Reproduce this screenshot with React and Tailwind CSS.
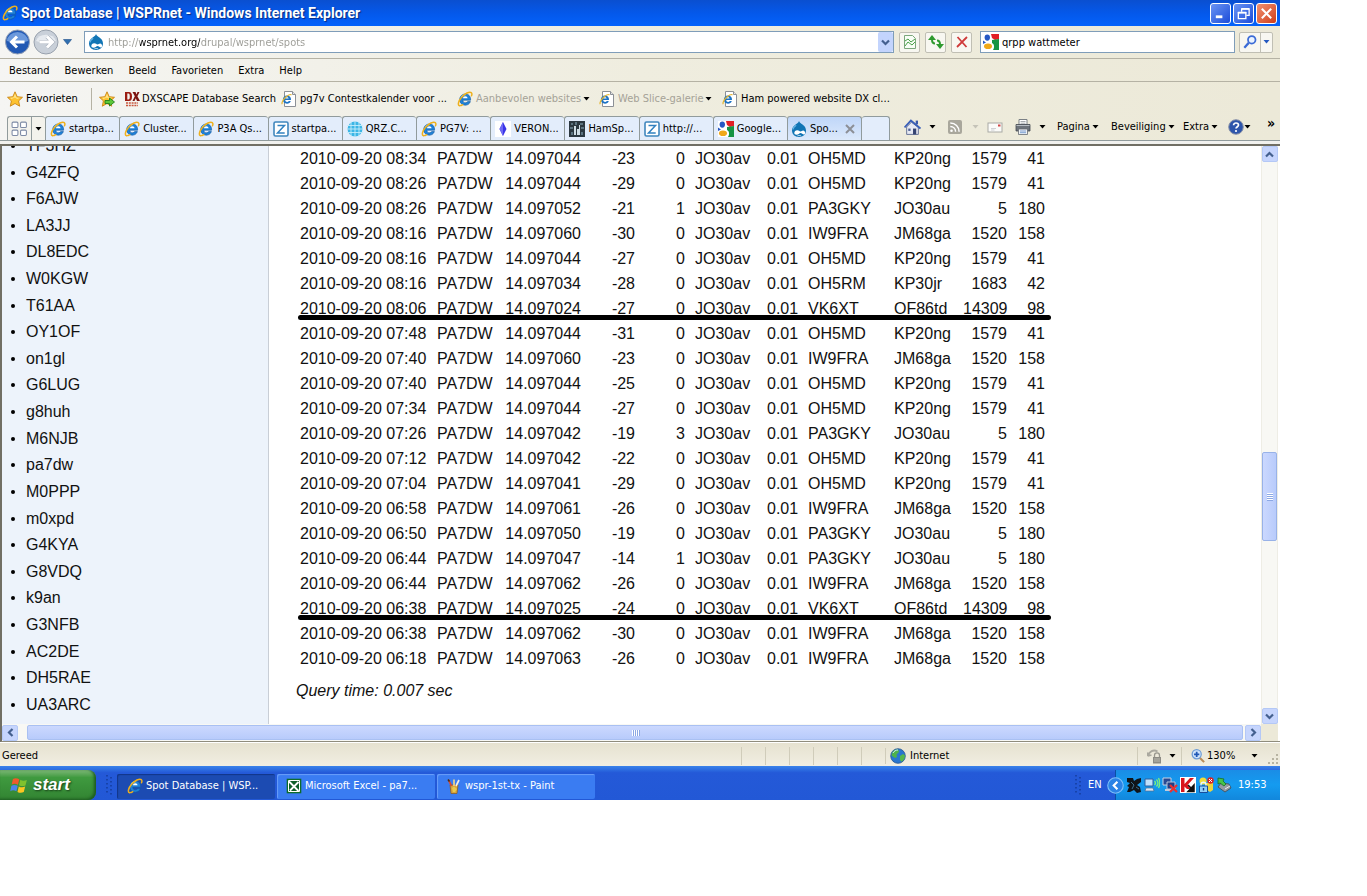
import React from 'react';

const callsigns = [
  'TF3HZ', 'G4ZFQ', 'F6AJW', 'LA3JJ', 'DL8EDC', 'W0KGW', 'T61AA', 'OY1OF', 'on1gl', 'G6LUG', 'g8huh',
  'M6NJB', 'pa7dw', 'M0PPP', 'm0xpd', 'G4KYA', 'G8VDQ', 'k9an', 'G3NFB', 'AC2DE', 'DH5RAE', 'UA3ARC',
];

const reporters = {
  OH5MD: ['KP20ng', 1579, 41],
  PA3GKY: ['JO30au', 5, 180],
  IW9FRA: ['JM68ga', 1520, 158],
  OH5RM: ['KP30jr', 1683, 42],
  VK6XT: ['OF86td', 14309, 98],
};

// time, frequency, snr, drift, reporter
const spots = [
  ['08:34', '14.097044', -23, 0, 'OH5MD'],
  ['08:26', '14.097044', -29, 0, 'OH5MD'],
  ['08:26', '14.097052', -21, 1, 'PA3GKY'],
  ['08:16', '14.097060', -30, 0, 'IW9FRA'],
  ['08:16', '14.097044', -27, 0, 'OH5MD'],
  ['08:16', '14.097034', -28, 0, 'OH5RM'],
  ['08:06', '14.097024', -27, 0, 'VK6XT'],
  ['07:48', '14.097044', -31, 0, 'OH5MD'],
  ['07:40', '14.097060', -23, 0, 'IW9FRA'],
  ['07:40', '14.097044', -25, 0, 'OH5MD'],
  ['07:34', '14.097044', -27, 0, 'OH5MD'],
  ['07:26', '14.097042', -19, 3, 'PA3GKY'],
  ['07:12', '14.097042', -22, 0, 'OH5MD'],
  ['07:04', '14.097041', -29, 0, 'OH5MD'],
  ['06:58', '14.097061', -26, 0, 'IW9FRA'],
  ['06:50', '14.097050', -19, 0, 'PA3GKY'],
  ['06:44', '14.097047', -14, 1, 'PA3GKY'],
  ['06:44', '14.097062', -26, 0, 'IW9FRA'],
  ['06:38', '14.097025', -24, 0, 'VK6XT'],
  ['06:38', '14.097062', -30, 0, 'IW9FRA'],
  ['06:18', '14.097063', -26, 0, 'IW9FRA'],
];

/* ---------- Icons ---------- */

const Svg = ({ size = 16, className = '', children }) => (
  <svg width={size} height={size} viewBox="0 0 16 16" className={`shrink-0 ${className}`} aria-hidden="true">
    {children}
  </svg>
);

const IeIcon = ({ size = 16 }) => (
  <Svg size={size}>
    <path d="M13.6 9.2H5.8c.1 1.7 1.1 2.6 2.6 2.6 1.1 0 1.900-.5 2.300-1.200h2.700c-.8 2.300-2.700 3.600-5.100 3.600-3.400 0-5.600-2.300-5.600-5.600S5.100 3 8.400 3c3.400 0 5.400 2.500 5.200 6.200z" fill="#1f82d8" stroke="#0d559f" strokeWidth=".6" />
    <path d="M5.900 7.200h4.700C10.400 5.900 9.600 5.200 8.300 5.200S6.100 5.900 5.900 7.200z" fill="#fff" />
    <path d="M4 6.500C5 4.500 6.700 3.700 8.600 3.800" stroke="#8fd2ff" strokeWidth="1.100" fill="none" />
    <path d="M2.300 14.600c-1.900-.8-.7-4.800 2.300-8.300C7.900 2.500 12.500.2 14.300 1.700c.8.7.7 1.900.2 3.100" stroke="#eeb01c" strokeWidth="1.500" fill="none" strokeLinecap="round" />
    <path d="M2.300 14.600c1 .3 2.300-.2 3.500-1" stroke="#eeb01c" strokeWidth="1.300" fill="none" strokeLinecap="round" />
  </Svg>
);

const PageIcon = () => (
  <Svg>
    <path d="M3.500.5h8l3 3v12h-11z" fill="#fff" stroke="#8c9096" />
    <path d="M11.500.5v3h3" fill="#e4e4e4" stroke="#8c9096" />
    <path d="M10 9H4.200c.1 1.300.8 1.900 1.900 1.900.8 0 1.300-.3 1.700-.9h2c-.6 1.700-2 2.700-3.800 2.700-2.500 0-4.100-1.700-4.100-4.100s1.600-4.100 4.100-4.100S10.200 6.200 10 9z" fill="#1d73c4" />
    <path d="M4.300 7.500h3.300c-.2-.9-.8-1.300-1.600-1.300s-1.500.4-1.700 1.300z" fill="#fff" />
    <path d="M1.300 13.200C.3 12.200 2 8.800 4.600 6.300c2.300-2.200 5-3.200 5.900-2.300" stroke="#e6b52c" strokeWidth="1.200" fill="none" />
  </Svg>
);

const StarIcon = ({ add }) => (
  <Svg>
    <path d="M8 .8l2.200 4.900 5.300.6-3.900 3.600 1.100 5.300L8 12.500l-4.700 2.700 1.100-5.300L.5 6.300l5.300-.6z" fill="#fdc22f" stroke="#c98415" strokeWidth=".9" strokeLinejoin="round" />
    <path d="M8 2.700l1.500 3.700 3.600.4-3 1.200L8 6.500 4.500 8 3 6.800l3.500-.4z" fill="#ffe58a" />
    {add && <path d="M6 9.500h4.500V7l5 4-5 4v-2.500H6z" fill="#5dc83a" stroke="#23801b" strokeWidth=".9" />}
  </Svg>
);

const DrupalIcon = ({ size = 16 }) => (
  <Svg size={size}>
    <path d="M8 0c.7 1.900 2 2.400 3.500 3.500C13.600 5 15 6.900 15 9.400 15 13.200 11.900 16 8 16s-7-2.800-7-6.600C1 6.900 2.500 4.900 4.600 3.500 6.100 2.500 7.400 1.900 8 0z" fill="#1175b5" />
    <path d="M5.200 4.200C3.500 5.200 2.300 6.500 2 8.300" stroke="#66b4e4" strokeWidth="1.200" fill="none" />
    <path d="M3.300 12.100c0-1.700 1.300-2.900 2.900-2.900 1.700 0 2.300 1.200 3.300 1.200 1.100 0 1.500-1 2.600-1 1.200 0 2 1.200 2 2.400 0 1-.5 1.700-1.200 1.700-1.200 0-2.100-1.500-3.300-1.500s-2.300 1.800-4 1.800c-1.400 0-2.300-.7-2.300-1.700z" fill="#fff" />
    <path d="M6.300 15c1.300-.6 2.600-.6 3.800 0" stroke="#fff" strokeWidth=".8" fill="none" />
  </Svg>
);

const GoogleIcon = () => (
  <Svg>
    <path d="M0 0h16v16H0z" fill="#fff" />
    <path d="M8 0h8v5l-4 1-3-2z" fill="#e21f26" />
    <path d="M9 6l7-1v11h-6c2-3 1-6-1-7z" fill="#169443" />
    <ellipse cx="4.300" cy="3.600" rx="2.700" ry="3.100" fill="#2658c4" />
    <ellipse cx="5" cy="12.300" rx="4" ry="2.800" fill="#f0a818" />
    <path d="M0 6.500l3 2-3 1.500z" fill="#2658c4" />
  </Svg>
);

const ZIcon = () => (
  <Svg>
    <rect x="1" y="1" width="14" height="14" rx="1.500" fill="#fff" stroke="#3f86bd" strokeWidth="1.600" />
    <path d="M4.500 4.500h7l-7 7.500h7.200" fill="none" stroke="#3181c0" strokeWidth="1.500" />
  </Svg>
);

const QrzIcon = () => (
  <Svg>
    <circle cx="8" cy="8" r="7.500" fill="#3cb6e6" />
    <path d="M0 4.500h16M0 8h16M0 11.500h16M4 0v16M8 0v16M12 0v16" stroke="#c4ecfa" strokeWidth=".9" />
  </Svg>
);

const VeronIcon = () => (
  <Svg>
    <path d="M0 0h16v16H0z" fill="#fff" />
    <path d="M8 1l3.500 7L8 15 4.500 8z" fill="#3a35e8" />
    <path d="M8 1v14L4.500 8z" fill="#6f6af5" />
  </Svg>
);

const HamSpotsIcon = () => (
  <Svg>
    <path d="M0 0h16v16H0z" fill="#2c3840" />
    <path d="M2 2h2v2H2zM6 1h2v3H6zM11 2h3v2h-3zM1 6h3v2H1zM12 6h3v2h-3zM2 11h2v3H2zM12 11h2v3h-2z" fill="#5d7480" />
    <path d="M5 5h2v9H5zM8 8h2v6H8zM10 4h1v10h-1z" fill="#cfdde4" />
  </Svg>
);

const DxIcon = () => (
  <svg width="16" height="16" viewBox="0 0 16 16" className="shrink-0" aria-hidden="true">
    <path d="M1 1h4c2 0 3 1.500 3 4.500S7 10 5 10H1zM3.300 2.500v6H4.500c1 0 1.300-1 1.300-3s-.3-3-1.300-3z" fill="#9a1c12" fillRule="evenodd" />
    <path d="M8.500 1h3l1 2.500 1-2.500h2L13.400 5.300 16 10h-3l-1.200-2.700L10.500 10h-2l2.300-4.700z" fill="#7a1410" />
    <path d="M2 12h12M2 14.500h12" stroke="#c8553c" strokeWidth="1.300" strokeDasharray="2 .8" />
  </svg>
);

const GlobeIcon = () => (
  <Svg>
    <circle cx="8" cy="8" r="7.300" fill="#2976cf" stroke="#27568f" strokeWidth=".8" />
    <path d="M2.500 4C4 1.500 7 1 8.500 1.800L9 4 6.500 6.500 7 9l-2 1L1.500 7.500z" fill="#4fb24a" />
    <path d="M10 8l3-2 2 1.500c0 3-1.500 5-3.500 6.300L10 12z" fill="#56b84c" />
    <path d="M3 5c1-2 3-3 5-3" stroke="#c9ecff" fill="none" />
  </Svg>
);

const HomeIcon = () => (
  <Svg size={17}>
    <path d="M11 1.500h2.200V5H11z" fill="#3a58a8" />
    <path d="M2.500 7.500L7 3l6.500 5v6.500h-11z" fill="#e6e9f3" stroke="#54628a" strokeWidth=".8" />
    <path d="M.5 8L6.500 1.500 15.500 9" fill="none" stroke="#3a5fb8" strokeWidth="1.700" />
    <path d="M4 9h2.200v2.200H4z" fill="#4b5e95" />
    <path d="M8.500 9h3v5.500h-3z" fill="#344372" />
  </Svg>
);

const RssIcon = () => (
  <Svg>
    <rect x="1" y="1" width="14" height="14" rx="2" fill="#a9a79c" />
    <circle cx="4.500" cy="11.700" r="1.300" fill="#fff" />
    <path d="M3.300 7.500c3 0 5.300 2.300 5.300 5.300M3.300 4c5 0 8.800 3.800 8.800 8.800" fill="none" stroke="#fff" strokeWidth="1.500" />
  </Svg>
);

const MailIcon = () => (
  <Svg>
    <rect x="1" y="4" width="14" height="9" fill="#fbfbf9" stroke="#a9aaa5" />
    <path d="M11 5.500h2.500v2H11z" fill="#d34848" />
    <path d="M4 9.500h5M4 11h3.500" stroke="#c5c7ca" strokeWidth=".8" />
  </Svg>
);

const PrinterIcon = () => (
  <Svg>
    <path d="M4 .5h8V6H4z" fill="#fff" stroke="#7b8085" />
    <path d="M5.500 2.500h5M5.500 4.200h5" stroke="#91969c" strokeWidth=".8" />
    <path d="M1 5.500h14V12H1z" fill="#6d737b" stroke="#454a52" strokeWidth=".8" />
    <path d="M1.500 6.500h13" stroke="#b4bac1" />
    <path d="M3.500 10h9v5.500h-9z" fill="#eef1f5" stroke="#656b72" strokeWidth=".8" />
    <path d="M5 12h6M5 13.700h6" stroke="#608cc8" strokeWidth=".8" />
  </Svg>
);

const HelpIcon = () => (
  <Svg>
    <circle cx="8" cy="8" r="7.300" fill="#2d55ab" stroke="#8b93a8" strokeWidth="1" />
    <path d="M5.600 6.300C5.600 4.700 6.700 4 8 4s2.500.8 2.500 2.100C10.500 7.700 8 7.700 8 9.600" fill="none" stroke="#fff" strokeWidth="1.700" />
    <circle cx="8" cy="12" r="1.100" fill="#fff" />
  </Svg>
);

const FlagIcon = () => (
  <Svg size={19}>
    <path d="M2.500 2.500C4.200 1.400 6 1.700 7.800 2.700L6.700 7.300C5 6.400 3.200 6.300 1.400 7.200z" fill="#ef5a2b" />
    <path d="M8.700 3.200c1.700 1 3.700 1 5.500.1L13 7.900c-1.800.9-3.700.8-5.400-.2z" fill="#7fc22e" />
    <path d="M1.200 8.200c1.800-1 3.500-.8 5.300.1L5.400 12.800c-1.800-.9-3.500-1-5.200 0z" fill="#4c84ea" />
    <path d="M7.400 8.800c1.700.9 3.600 1 5.400.1l-1.200 4.600c-1.800.9-3.600.8-5.300-.1z" fill="#fcc622" />
  </Svg>
);

const ExcelIcon = () => (
  <Svg>
    <path d="M.7.7h14.600v14.600H.7z" fill="#0d6b2b" />
    <path d="M2.500 2.500h11v11h-11z" fill="#0f5f29" stroke="#fff" />
    <path d="M3 3.500l9.500 9.500M12.500 4L4 12.500" stroke="#fff" strokeWidth="1.800" />
  </Svg>
);

const PaintIcon = () => (
  <Svg>
    <path d="M4 7h8l-1 8.500H5z" fill="#d9a43b" stroke="#8a5a18" strokeWidth=".7" />
    <path d="M5.500 8L2.500 2" stroke="#d84a32" strokeWidth="1.700" />
    <path d="M8 8V1.500" stroke="#f0d58b" strokeWidth="1.700" />
    <path d="M10 8l3-6" stroke="#f7efe0" strokeWidth="1.700" />
    <path d="M2 1.500l1.500 2" stroke="#44301b" strokeWidth="1.500" />
    <path d="M6 10l2-1.500L11 11l-2 3H7z" fill="#e9c94c" />
  </Svg>
);

const LockIcon = () => (
  <Svg>
    <path d="M1 8C2 3.500 6.500 1 10.500 3.500M1 8l-.5-3.500M1 8l3.500-1" fill="none" stroke="#aaa89f" strokeWidth="1.800" />
    <path d="M7.500 9V7.200c0-3.200 5-3.200 5 0V9" fill="none" stroke="#98968d" strokeWidth="1.300" />
    <path d="M6 9h8v6.500H6z" fill="#8d8b84" />
    <path d="M7 11h6M7 13h6" stroke="#c8c6bd" strokeWidth=".8" />
  </Svg>
);

const ZoomIcon = () => (
  <Svg size={14}>
    <path d="M10 10l5 5" stroke="#b98c58" strokeWidth="2.400" />
    <circle cx="6.500" cy="6" r="5.200" fill="#cfe3fb" stroke="#6c9bd6" strokeWidth="1.400" />
    <path d="M6.500 3v6M3.500 6h6" stroke="#1f57b5" strokeWidth="2" />
  </Svg>
);

const Caret = ({ className = 'text-black' }) => (
  <svg width="7" height="4" viewBox="0 0 7 4" className={`shrink-0 ${className}`} aria-hidden="true">
    <path d="M.5 0h6l-3 3.500z" fill="currentColor" />
  </svg>
);

const Chevron = ({ turn = '' }) => (
  <svg width="9" height="9" viewBox="0 0 9 9" className={turn} aria-hidden="true">
    <path d="M1 2.500l3.500 3.500L8 2.500" fill="none" stroke="#44608f" strokeWidth="2.200" />
  </svg>
);

/* ---------- Title bar ---------- */

const TitleBar = () => (
  <header className="flex h-[26px] shrink-0 items-center gap-[3px] bg-linear-to-b from-[#0a4fd0] via-[#0458ea] to-[#0462fb] pr-[3px] pl-[2px]">
    <IeIcon />
    <h1 className="flex-1 font-[Roboto,'Open_Sans',sans-serif] text-sm font-bold text-white [text-shadow:1px_1px_1px_#0a2a80]">
      Spot Database | WSPRnet - Windows Internet Explorer
    </h1>
    <div className="flex gap-[2px]">
      <button aria-label="Minimaliseren" className="flex size-[21px] items-center justify-center rounded-[3px] border border-white bg-linear-to-br from-[#6b93f3] to-[#1c49d8]">
        <Svg size={15}><path d="M3 11.500h7" stroke="#fff" strokeWidth="3" /></Svg>
      </button>
      <button aria-label="Verkleinen" className="flex size-[21px] items-center justify-center rounded-[3px] border border-white bg-linear-to-br from-[#6b93f3] to-[#1c49d8]">
        <Svg size={15}>
          <path d="M6 6V3h8v7h-3" fill="none" stroke="#fff" strokeWidth="1.400" />
          <path d="M2.500 7h8v6.500h-8z" fill="none" stroke="#fff" strokeWidth="1.400" />
          <path d="M2 7h9M6 3h8" stroke="#fff" strokeWidth="2" />
        </Svg>
      </button>
      <button aria-label="Sluiten" className="flex size-[21px] items-center justify-center rounded-[3px] border border-white bg-linear-to-br from-[#f0906f] to-[#cf3b13]">
        <Svg size={15}><path d="M3 3l10 10M13 3L3 13" stroke="#fff" strokeWidth="2.200" /></Svg>
      </button>
    </div>
  </header>
);

/* ---------- Navigation ---------- */

const toolButton = 'flex h-[21px] w-[21px] items-center justify-center rounded-[2px] border border-[#c0bfb4] bg-[#f8f7f1]';

const NavBar = () => (
  <div className="flex h-[33px] shrink-0 items-center border-b border-[#b5b2a4] pr-[7px] pl-[5px]">
    <button aria-label="Terug">
      <svg width="26" height="26" viewBox="0 0 26 26" aria-hidden="true">
        <circle cx="12.500" cy="13" r="12" fill="#2259b4" stroke="#94a0b5" />
        <path d="M2 12a10.500 9 0 0 1 21 0q-10 4-21 0z" fill="#6c99dc" />
        <path d="M12 7.500L6.500 13l5.500 5.500M7 13h12.500" fill="none" stroke="#fff" strokeWidth="3" />
      </svg>
    </button>
    <button aria-label="Vooruit" className="ml-[2px]">
      <svg width="26" height="26" viewBox="0 0 26 26" aria-hidden="true">
        <circle cx="13" cy="13" r="12" fill="#c9d0d9" stroke="#98a1ad" />
        <path d="M3 12a10.500 9 0 0 1 20 0q-10 4-20 0z" fill="#e6eaef" />
        <path d="M14 7.500l5.500 5.500-5.500 5.500M19 13H6.500" fill="none" stroke="#a9b1bc" strokeWidth="4.200" />
        <path d="M14 7.500l5.500 5.500-5.500 5.500M19 13H6.500" fill="none" stroke="#fff" strokeWidth="3" />
      </svg>
    </button>
    <button aria-label="Recente pagina's" className="mr-3 ml-1">
      <svg width="9" height="6" viewBox="0 0 9 6" aria-hidden="true">
        <path d="M.5.500h8L4.500 5.500z" fill="#2f6fb0" stroke="#1f4f8a" strokeWidth=".6" />
      </svg>
    </button>
    <div className="flex h-[22px] flex-1 items-center gap-1 border border-[#7f9db9] bg-white pl-[3px]">
      <DrupalIcon />
      {/* the host part of the address is drawn darker than the rest */}
      <input
        aria-label="Adres"
        defaultValue="http://wsprnet.org/drupal/wsprnet/spots"
        className="min-w-0 flex-1 bg-[linear-gradient(90deg,#9a9a94_32px,#000_32px,#000_92px,#9a9a94_92px)] bg-clip-text pt-[2px] text-transparent outline-none"
      />
      <button aria-label="Adressen tonen" className="flex h-5 w-[15px] items-center justify-center rounded-[2px] bg-[#c3d4fd]">
        <Chevron />
      </button>
    </div>
    <div className="ml-[5px] flex gap-[5px]">
      <button aria-label="Compatibiliteit" className={toolButton}>
        <Svg>
          <path d="M2.500 1.500h8l3 3v10h-11z" fill="#f7fdf5" stroke="#7ba77b" />
          <path d="M3 7l3-2 3 3 4-3M3 12l3-4 4 3 3-3" fill="none" stroke="#49a049" />
        </Svg>
      </button>
      <button aria-label="Vernieuwen" className={toolButton}>
        <Svg>
          <path d="M7 9.500C4.500 9.500 4 8 4 5.500" fill="none" stroke="#2f9a2f" strokeWidth="2" />
          <path d="M0 6l4-5 4 5z" fill="#2f9a2f" />
          <path d="M9 6.500c2.500 0 3 1.500 3 4" fill="none" stroke="#2f9a2f" strokeWidth="2" />
          <path d="M8 10h8l-4 5z" fill="#2f9a2f" />
        </Svg>
      </button>
      <button aria-label="Stoppen" className={toolButton}>
        <Svg><path d="M3.500 3l9 10M13 3L3 13" stroke="#cf3a3a" strokeWidth="1.800" /></Svg>
      </button>
    </div>
    <div className="ml-2 flex h-[22px] w-[255px] items-center gap-[3px] border border-[#7f9db9] bg-white pl-[2px]">
      <GoogleIcon />
      <input aria-label="Zoeken" defaultValue="qrpp wattmeter" className="min-w-0 flex-1 pt-[2px] outline-none" />
    </div>
    <div className="ml-1 flex h-[21px] w-[34px] rounded-[2px] border border-[#c0bfb4] bg-[#f8f7f1]">
      <button aria-label="Zoek" className="flex flex-1 items-center justify-center">
        <Svg size={14}>
          <circle cx="10" cy="5.500" r="4.300" fill="#eaf3ff" stroke="#3b6bd6" strokeWidth="2" />
          <path d="M6.500 9L1.500 14.500" stroke="#3b6bd6" strokeWidth="2.600" />
        </Svg>
      </button>
      <button aria-label="Zoekopties" className="flex w-3 items-center justify-center border-l border-[#c0bfb4]">
        <Caret className="text-[#2458c0]" />
      </button>
    </div>
  </div>
);

const MenuBar = () => (
  <nav className="flex h-[23px] shrink-0 items-center gap-[15px] border-b border-[#b5b2a4] pt-[2px] pl-[9px]">
    {['Bestand', 'Bewerken', 'Beeld', 'Favorieten', 'Extra', 'Help'].map((name) => (
      <button key={name}>{name}</button>
    ))}
  </nav>
);

const FavoritesBar = () => (
  <div className="flex h-[34px] shrink-0 items-center whitespace-nowrap">
    <button className="ml-[7px] flex w-[84px] items-center gap-[3px]"><StarIcon />Favorieten</button>
    <span className="mr-[7px] h-[22px] w-px bg-[#b5b2a4]" />
    <button aria-label="Toevoegen aan Favorietenbalk" className="w-[25px]"><StarIcon add /></button>
    <a href="#dxscape" className="flex w-[157px] items-center gap-[2px]"><DxIcon />DXSCAPE Database Search</a>
    <a href="#pg7v" className="flex w-[176px] items-center gap-[3px]"><PageIcon />pg7v Contestkalender voor ...</a>
    <button className="flex w-[142px] items-center gap-[3px] text-[#a5a297]">
      <IeIcon /><span className="w-[104px] text-left">Aanbevolen websites</span><Caret />
    </button>
    <button className="flex w-[123px] items-center gap-[3px] text-[#a5a297]">
      <PageIcon /><span className="w-[84px] text-left">Web Slice-galerie</span><Caret />
    </button>
    <a href="#ham" className="flex items-center gap-[3px]"><PageIcon />Ham powered website DX cl...</a>
  </div>
);

/* ---------- Tabs and command bar ---------- */

const tabs = [
  ['startpa...', IeIcon],
  ['Cluster...', IeIcon],
  ['P3A Qs...', IeIcon],
  ['startpa...', ZIcon],
  ['QRZ.C...', QrzIcon],
  ['PG7V: ...', IeIcon],
  ['VERON...', VeronIcon],
  ['HamSp...', HamSpotsIcon],
  ['http://...', ZIcon],
  ['Google...', GoogleIcon],
];

const TabRow = () => (
  <div className="flex h-6 shrink-0 pl-[7px] whitespace-nowrap">
    <div className="flex w-[38px] rounded-t-[3px] border-t border-l border-[#919b9c] bg-[#f3f2ec]">
      <button aria-label="Snelle tabbladen" className="flex w-[23px] items-center justify-center">
        <Svg size={17}>
          <g fill="#fff" stroke="#7d8aa5">
            <rect x="1" y="2" width="5.500" height="5" rx="1" />
            <rect x="9" y="2" width="5.500" height="5" rx="1" />
            <rect x="1" y="9.500" width="5.500" height="5" rx="1" />
            <rect x="9" y="9.500" width="5.500" height="5" rx="1" />
          </g>
        </Svg>
      </button>
      <button aria-label="Tabbladenlijst" className="flex flex-1 items-center justify-center border-l border-[#919b9c]">
        <Caret />
      </button>
    </div>
    <div className="flex w-[742px]">
      {tabs.map(([name, Icon], i) => (
        <button key={i} className="flex min-w-0 flex-1 items-center gap-[3px] overflow-hidden rounded-t-[3px] border-t border-l border-[#919b9c] bg-[#e3edfb] pl-1">
          <Icon />{name}
        </button>
      ))}
    </div>
    <button className="flex w-[75px] items-center gap-[3px] rounded-t-[3px] border-x border-t border-[#919b9c] bg-linear-to-b from-[#bfd6f8] to-[#dce9fb] pl-[3px]">
      <DrupalIcon /><span className="flex-1 text-left">Spo...</span>
      <svg width="10" height="10" viewBox="0 0 10 10" className="mr-[6px]" aria-hidden="true">
        <path d="M1 1l8 8M9 1L1 9" stroke="#8c8f96" strokeWidth="2" />
      </svg>
    </button>
    <button aria-label="Nieuw tabblad" className="w-[28px] rounded-t-[3px] border-t border-r border-[#919b9c] bg-[#e3edfb]" />
    <div className="ml-auto flex w-[376px] items-center pb-[2px]">
      <button aria-label="Startpagina" className="flex w-[43px] items-center gap-2"><HomeIcon /><Caret /></button>
      <button aria-label="Feeds" className="flex w-10 items-center gap-[9px]"><RssIcon /><Caret className="text-[#c5c3b8]" /></button>
      <button aria-label="E-mail lezen" className="w-7"><MailIcon /></button>
      <button aria-label="Afdrukken" className="flex w-[42px] items-center gap-2"><PrinterIcon /><Caret /></button>
      <button className="flex w-[54px] items-center gap-[2px]">Pagina<Caret /></button>
      <button className="flex w-[72px] items-center gap-[2px]">Beveiliging<Caret /></button>
      <button className="flex w-[45px] items-center gap-[2px]">Extra<Caret /></button>
      <button aria-label="Help" className="flex w-[39px] items-center"><HelpIcon /><Caret /></button>
      <button aria-label="Meer" className="self-start text-sm leading-none font-bold">»</button>
    </div>
  </div>
);

/* ---------- Page ---------- */

const cell = 'px-[5px]';
const num = 'px-[5px] text-right';

const Sidebar = () => (
  <ul className="-mt-[10px] flex w-[267px] shrink-0 flex-col justify-between border-r border-[#c9ced6] bg-[#edf3fb] pb-[9px] pl-[9px]">
    {callsigns.map((call) => (
      <li key={call} className="flex items-center leading-5">
        <span className="mr-[11px] size-[4px] rounded-full bg-black" />
        <a href={`#${call}`}>{call}</a>
      </li>
    ))}
  </ul>
);

const SpotTable = () => (
  <table className="w-[755px] table-fixed">
    <colgroup>
      <col className="w-[137px]" />
      <col className="w-[68px]" />
      <col className="w-[86px]" />
      <col className="w-[54px]" />
      <col className="w-[50px]" />
      <col className="w-[72px]" />
      <col className="w-[41px]" />
      <col className="w-[86px]" />
      <col className="w-[69px]" />
      <col className="w-[54px]" />
      <col className="w-[38px]" />
    </colgroup>
    <tbody>
      {spots.map(([time, freq, snr, drift, reporter], i) => {
        const [grid, km, az] = reporters[reporter];
        return (
          <tr key={i} className="relative h-[25px] whitespace-nowrap">
            <td className={cell}>
              2010-09-20 {time}
              {/* thick marker under the long-haul spots */}
              {reporter === 'VK6XT' && <span className="absolute -right-px bottom-px left-[3px] h-[5px] rounded-full bg-black" />}
            </td>
            <td className={cell}>PA7DW</td>
            <td className={num}>{freq}</td>
            <td className={num}>{snr}</td>
            <td className={num}>{drift}</td>
            <td className={cell}>JO30av</td>
            <td className={num}>0.01</td>
            <td className={cell}>{reporter}</td>
            <td className={cell}>{grid}</td>
            <td className={num}>{km}</td>
            <td className={num}>{az}</td>
          </tr>
        );
      })}
    </tbody>
  </table>
);

const scrollButton = 'flex size-4 items-center justify-center rounded-[2px] border border-[#b4c8f6] bg-[#c6d5fd]';

const VerticalScroll = () => (
  <div className="flex w-[17px] shrink-0 flex-col items-center border-x border-[#eeede5] bg-[#f8f8f4]">
    <button aria-label="Omhoog" className={scrollButton}><Chevron turn="rotate-180" /></button>
    <div className="flex-[291]" />
    <div className="flex w-[15px] flex-[87] flex-col items-center justify-center gap-px rounded-[2px] border border-[#98b2e8] bg-linear-to-r from-[#cbd8fe] to-[#b8cbfb]">
      {[1, 2, 3, 4].map((n) => <span key={n} className="h-px w-[6px] bg-white shadow-[0_1px_0_#8ca8e4]" />)}
    </div>
    <div className="flex-[167]" />
    <button aria-label="Omlaag" className={scrollButton}><Chevron /></button>
  </div>
);

const HorizontalScroll = () => (
  <div className="flex h-[17px] shrink-0 items-center bg-[#f8f8f4]">
    <button aria-label="Naar links" className={scrollButton}><Chevron turn="rotate-90" /></button>
    <div className="ml-[9px] flex h-[15px] flex-1 items-center justify-center gap-px rounded-[2px] border border-[#a9c0f2] bg-linear-to-b from-[#cbd8fe] to-[#b8cbfb]">
      {[1, 2, 3, 4].map((n) => <span key={n} className="h-[6px] w-px bg-white shadow-[1px_0_0_#8ca8e4]" />)}
    </div>
    <button aria-label="Naar rechts" className={`ml-[2px] ${scrollButton}`}><Chevron turn="-rotate-90" /></button>
    <div className="h-full w-[17px] bg-[#ece9d8]" />
  </div>
);

const Page = () => (
  <div className="flex min-h-0 flex-1 flex-col border-t-2 border-b border-l-2 border-[#716f64] border-b-[#8f8c7d] bg-white pr-[2px]">
    <div className="flex min-h-0 flex-1 font-['Liberation_Sans',Arial,sans-serif] text-base leading-5 text-[#111]">
      <div className="flex min-w-0 flex-1 overflow-hidden">
        <Sidebar />
        <main className="flex-1 pl-[26px]">
          <SpotTable />
          <p className="pt-[10px] pl-px italic">Query time: 0.007 sec</p>
        </main>
      </div>
      <VerticalScroll />
    </div>
    <HorizontalScroll />
  </div>
);

/* ---------- Status bar and task bar ---------- */

const StatusBar = () => (
  <div className="flex h-6 shrink-0 items-center border-t border-white bg-linear-to-b from-[#e6e2d0] to-[#f1eee2] pt-[2px] pl-[2px]">
    <span className="flex-1">Gereed</span>
    {[1, 2, 3, 4, 5, 6].map((n) => <span key={n} className="h-[18px] w-6 border-l border-[#d0ccba]" />)}
    <div className="flex w-[252px] items-center gap-1 border-l border-[#d0ccba] pl-1"><GlobeIcon />Internet</div>
    <button aria-label="Beveiligde modus" className="flex h-[18px] w-11 items-center gap-[6px] border-l border-[#d0ccba] pl-[9px]"><LockIcon /><Caret /></button>
    <button className="flex h-[18px] w-[85px] items-center gap-[2px] border-l border-[#d0ccba] pl-[9px]">
      <ZoomIcon /><span className="w-[42px] text-left">130%</span><Caret />
    </button>
    <svg width="14" height="14" viewBox="0 0 14 14" className="self-end" aria-hidden="true">
      <path d="M10 2h2v2h-2zM6 6h2v2H6zM10 6h2v2h-2zM2 10h2v2H2zM6 10h2v2H6zM10 10h2v2h-2z" fill="#b8b4a2" />
    </svg>
  </div>
);

const Grip = ({ className = '' }) => (
  <svg width="8" height="22" viewBox="0 0 8 22" className={`shrink-0 ${className}`} aria-hidden="true">
    <path d="M2 1v20M6 3v18" stroke="#153c9c" strokeWidth="1.500" strokeDasharray="1.500 2.500" />
  </svg>
);

const TrayIcons = () => (
  <div className="flex gap-[2px]">
    <Svg>
      <path d="M1 1h6l1 3 3-2 4-1v4l-4 3 3 2 1 5-4 1-3-3-4 2H1l2-5-2-1 3-3-3-1z" fill="#101418" />
      <path d="M5 5l3 3-2 4M10 10l3 2" stroke="#3d6d8c" fill="none" />
    </Svg>
    <Svg>
      <path d="M1 2h8v7H1z" fill="#bfe0fb" stroke="#315f9c" />
      <path d="M2 11h7l1 3H1z" fill="#dce8f2" stroke="#4d6c93" strokeWidth=".7" />
      <path d="M10.500 4q2 2 0 4M12.500 2.500q3 3.500 0 7M14.500 1q2.500 5 0 10" stroke="#7df07a" strokeWidth="1.300" fill="none" />
    </Svg>
    <Svg>
      <path d="M1 1h8v7H1z" fill="#294a94" stroke="#c9d3e5" />
      <path d="M5 5h8v7H5z" fill="#213f86" stroke="#b8c4dc" />
      <path d="M3 13h8" stroke="#c0cbdc" strokeWidth="2" />
      <path d="M8 8l7 7M15 8l-7 7" stroke="#e83030" strokeWidth="2.200" />
    </Svg>
    <Svg>
      <path d="M0 0h16v16H0z" fill="#fff" />
      <path d="M1 1h3.500v6L10 1h4L7.500 8l3.500 4H7L4.500 9.500V15H1z" fill="#d9141c" />
      <path d="M8 8l5 5M14 8v6.500H8z" stroke="#111" strokeWidth="1.500" fill="#111" />
    </Svg>
    <Svg>
      <circle cx="5" cy="4" r="3.500" fill="#f4dd38" />
      <path d="M7 6h8v7l-3 2-5-3z" fill="#edd43d" />
      <path d="M3 9V7.500c0-3 5-3 5 0V9" stroke="#eaf7ff" strokeWidth="1.400" fill="none" />
      <path d="M1.500 9h8v6.500h-8z" fill="#8fd0fa" stroke="#174d9c" />
      <path d="M5.500 11v2.500" stroke="#113a80" strokeWidth="1.400" />
      <circle cx="12.500" cy="3.500" r="3.200" fill="#d82424" />
      <path d="M11 2l3 3M14 2l-3 3" stroke="#fff" />
    </Svg>
    <Svg>
      <path d="M5 6l8 1 2 4-6 4-7-5z" fill="#949ba3" stroke="#3e4852" strokeWidth=".8" />
      <path d="M9 12l5-3" stroke="#e8ecf0" />
      <path d="M2 1l6 1-1 2 3 3-2 2-4-3-2 1z" fill="#45c44a" stroke="#167021" strokeWidth=".8" />
    </Svg>
  </div>
);

const TaskBar = () => (
  <footer className="flex h-[34px] shrink-0 items-end bg-linear-to-b from-[#3a82ea] via-[#2459d8] via-20% to-[#2258d6] text-white">
    <button className="flex h-[30px] w-24 items-center gap-1 rounded-r-[8px] bg-linear-to-b from-[#7cb877] via-[#3f9a3f] via-25% to-[#328432] pl-[10px] shadow-[inset_-2px_-1px_3px_#1d5a20]">
      <FlagIcon />
      <span className="font-['Liberation_Sans',Arial,sans-serif] text-[17px] font-bold italic [text-shadow:1px_1px_2px_#173d17]">start</span>
    </button>
    <Grip className="mr-1 mb-1 ml-[9px]" />
    <div className="flex h-[28px] flex-1 items-center gap-[2px]">
      <button className="flex h-[25px] w-[158px] items-center gap-[3px] rounded-[2px] bg-[#1c4bb2] pl-[10px] shadow-[inset_1px_1px_1px_#123689]">
        <IeIcon />Spot Database | WSP...
      </button>
      <button className="flex h-[25px] w-[158px] items-center gap-[3px] rounded-[2px] bg-[#3a7cf2] pl-[9px] shadow-[inset_1px_1px_1px_#6b9ffa]">
        <ExcelIcon />Microsoft Excel - pa7...
      </button>
      <button className="flex h-[25px] w-[158px] items-center gap-[3px] rounded-[2px] bg-[#3a7cf2] pl-[9px] shadow-[inset_1px_1px_1px_#6b9ffa]">
        <PaintIcon />wspr-1st-tx - Paint
      </button>
    </div>
    <Grip className="mb-1" />
    <button className="h-[30px] w-[33px] pl-[6px] text-left">EN</button>
    <div className="flex h-[30px] w-[165px] items-center bg-linear-to-b from-[#1a8de6] via-[#149bf0] to-[#1287dc] shadow-[inset_1px_0_0_#0b4fa4]">
      <button aria-label="Pictogrammen weergeven" className="-ml-2 mr-[2px]">
        <Svg size={17}>
          <circle cx="8" cy="8" r="7.300" fill="#2b83e6" stroke="#7fc0f8" />
          <path d="M9.800 4.500L6.300 8l3.500 3.500" fill="none" stroke="#fff" strokeWidth="2" />
        </Svg>
      </button>
      <TrayIcons />
      <span className="ml-[6px]">19:53</span>
    </div>
  </footer>
);

const App = () => (
  <div className="h-screen bg-white pr-[87px] pb-24">
    <div className="flex h-full flex-col bg-linear-to-r from-[#f5f5f3] via-[#efeddf] to-[#ece9d8] font-['DejaVu_Sans_Condensed',Tahoma,sans-serif] text-[11px] leading-4 text-black">
      <TitleBar />
      <NavBar />
      <MenuBar />
      <FavoritesBar />
      <TabRow />
      <div className="h-1 shrink-0 border-t border-[#919b9c] bg-[#f1f1ee]" />
      <Page />
      <StatusBar />
      <TaskBar />
    </div>
  </div>
);

export default App;
